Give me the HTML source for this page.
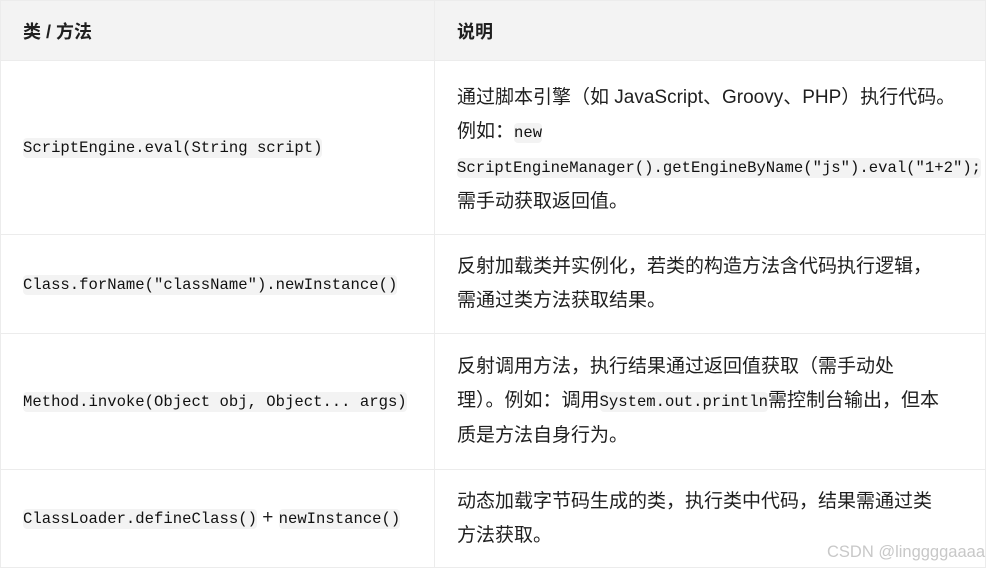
<!DOCTYPE html>
<html><head><meta charset="utf-8"><style>
body{margin:0;background:#fff;width:989px;height:581px;overflow:hidden;font-family:"Liberation Sans","Noto Sans CJK SC",sans-serif;color:#1f1f1f}
table{position:absolute;left:0;top:0;border-collapse:collapse;width:986px}
td,th{border:1px solid #ececec;text-align:left;vertical-align:middle;padding:0 0 0 22px}
th{background:#f3f3f3;height:59px;font-size:18px;font-weight:bold}
td{font-size:19px;line-height:34px}
td:first-child{width:411px}
code{font-family:"Liberation Mono",monospace;font-size:15.6px;background:#f3f3f3;border-radius:4px;padding:1px 0;color:#111}
.wm{position:absolute;right:4px;top:543px;color:#c8c8c8;font-size:16.5px}
</style></head><body>
<table>
<tr><th>类 / 方法</th><th>说明</th></tr>
<tr style="height:174px"><td><code>ScriptEngine.eval(String script)</code></td><td style="padding-top:4px">通过脚本引擎（如 JavaScript、Groovy、PHP）执行代码。<br>例如：<code>new</code><br><code>ScriptEngineManager().getEngineByName("js").eval("1+2");</code><br>需手动获取返回值。</td></tr>
<tr style="height:99px"><td><code>Class.forName("className").newInstance()</code></td><td>反射加载类并实例化，若类的构造方法含代码执行逻辑，<br>需通过类方法获取结果。</td></tr>
<tr style="height:136px"><td><code>Method.invoke(Object obj, Object... args)</code></td><td>反射调用方法，执行结果通过返回值获取（需手动处<br>理）。例如：调用<code>System.out.println</code>需控制台输出，但本<br>质是方法自身行为。</td></tr>
<tr style="height:98px"><td><code>ClassLoader.defineClass()</code> + <code>newInstance()</code></td><td>动态加载字节码生成的类，执行类中代码，结果需通过类<br>方法获取。</td></tr>
</table>
<div class="wm">CSDN @linggggaaaa</div>
</body></html>
